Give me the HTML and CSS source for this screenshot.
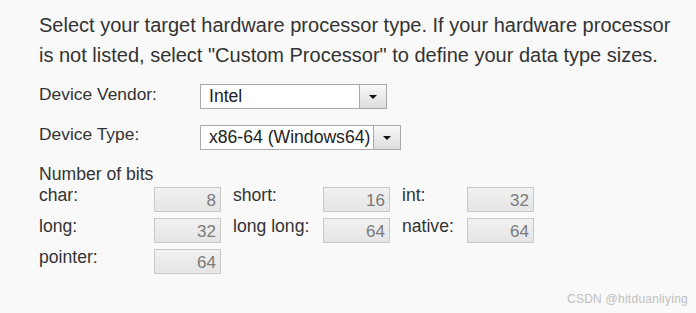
FILE: index.html
```html
<!DOCTYPE html>
<html>
<head>
<meta charset="utf-8">
<link rel="stylesheet" href="styles.css">
</head>
<body>
<div class="page">
  <p class="intro">Select your target hardware processor type. If your hardware processor is not listed, select "Custom Processor" to define your data type sizes.</p>
  <div class="field">
    <span class="flabel">Device Vendor:</span>
    <div class="select vendor"><span class="sval">Intel</span><span class="sbtn"><i class="tri"></i></span></div>
  </div>
  <div class="field">
    <span class="flabel second">Device Type:</span>
    <div class="select type"><span class="sval">x86-64 (Windows64)</span><span class="sbtn"><i class="tri"></i></span></div>
  </div>
  <div class="bits-title">Number of bits</div>
  <div class="bits">
    <span class="bl">char:</span><span class="box">8</span>
    <span class="bl pad">short:</span><span class="box">16</span>
    <span class="bl pad">int:</span><span class="box">32</span>
    <span class="bl">long:</span><span class="box">32</span>
    <span class="bl pad">long long:</span><span class="box">64</span>
    <span class="bl pad">native:</span><span class="box">64</span>
    <span class="bl">pointer:</span><span class="box">64</span>
  </div>
</div>
<div class="watermark">CSDN @hitduanliying</div>
</body>
</html>
```

FILE: styles.css
```css
html, body {
  margin: 0;
  padding: 0;
  background: #f9f9f9;
}
body {
  width: 696px;
  height: 313px;
  position: relative;
  overflow: hidden;
  font-family: "Liberation Sans", Arial, sans-serif;
  color: #333;
}
.page {
  padding: 10px 0 0 39px;
}
.intro {
  margin: 0;
  width: 650px;
  font-size: 20px;
  line-height: 30px;
  color: #333;
}
.field {
  display: flex;
  align-items: flex-start;
  margin-top: 14px;
}
.field + .field {
  margin-top: 16px;
}
.flabel {
  width: 161px;
  font-size: 17.4px;
  line-height: 20px;
}
.flabel.second {
  margin-top: -1px;
}
.select {
  display: flex;
  height: 25px;
  box-sizing: border-box;
  border: 1px solid #a9a9a9;
  background: #fff;
}
.vendor { width: 187px; }
.type { width: 201px; }
.sval {
  flex: 1;
  font-size: 17.6px;
  line-height: 23px;
  padding-left: 8px;
  color: #222;
  white-space: nowrap;
  overflow: hidden;
}
.sbtn {
  width: 26px;
  flex: none;
  border-left: 1px solid #a9a9a9;
  background: linear-gradient(#f8f8f8, #dddddd);
  display: flex;
  align-items: center;
  justify-content: center;
}
.tri {
  width: 0;
  height: 0;
  border-left: 4px solid transparent;
  border-right: 4px solid transparent;
  border-top: 4px solid #111;
}
.bits-title {
  margin-top: 14px;
  font-size: 17.6px;
  line-height: 20px;
}
.bits {
  display: grid;
  grid-template-columns: 115px 67px 102px 67px 77px 67px;
  row-gap: 4px;
  margin-top: 1px;
}
.bl {
  font-size: 17.6px;
  line-height: 20px;
}
.bl.pad { padding-left: 12px; }
.box {
  margin-top: 2px;
  height: 25px;
  box-sizing: border-box;
  border: 1px solid #c9c9c9;
  background: linear-gradient(#f1f1f1, #e5e5e5);
  color: #7a7a7a;
  font-size: 17px;
  line-height: 26px;
  text-align: right;
  padding-right: 4px;
  overflow: hidden;
}
.watermark {
  position: absolute;
  right: 8px;
  bottom: 8px;
  font-family: "Liberation Sans", Arial, sans-serif;
  font-size: 12px;
  letter-spacing: 0.25px;
  line-height: 12px;
  color: #c0c0c0;
}
```
